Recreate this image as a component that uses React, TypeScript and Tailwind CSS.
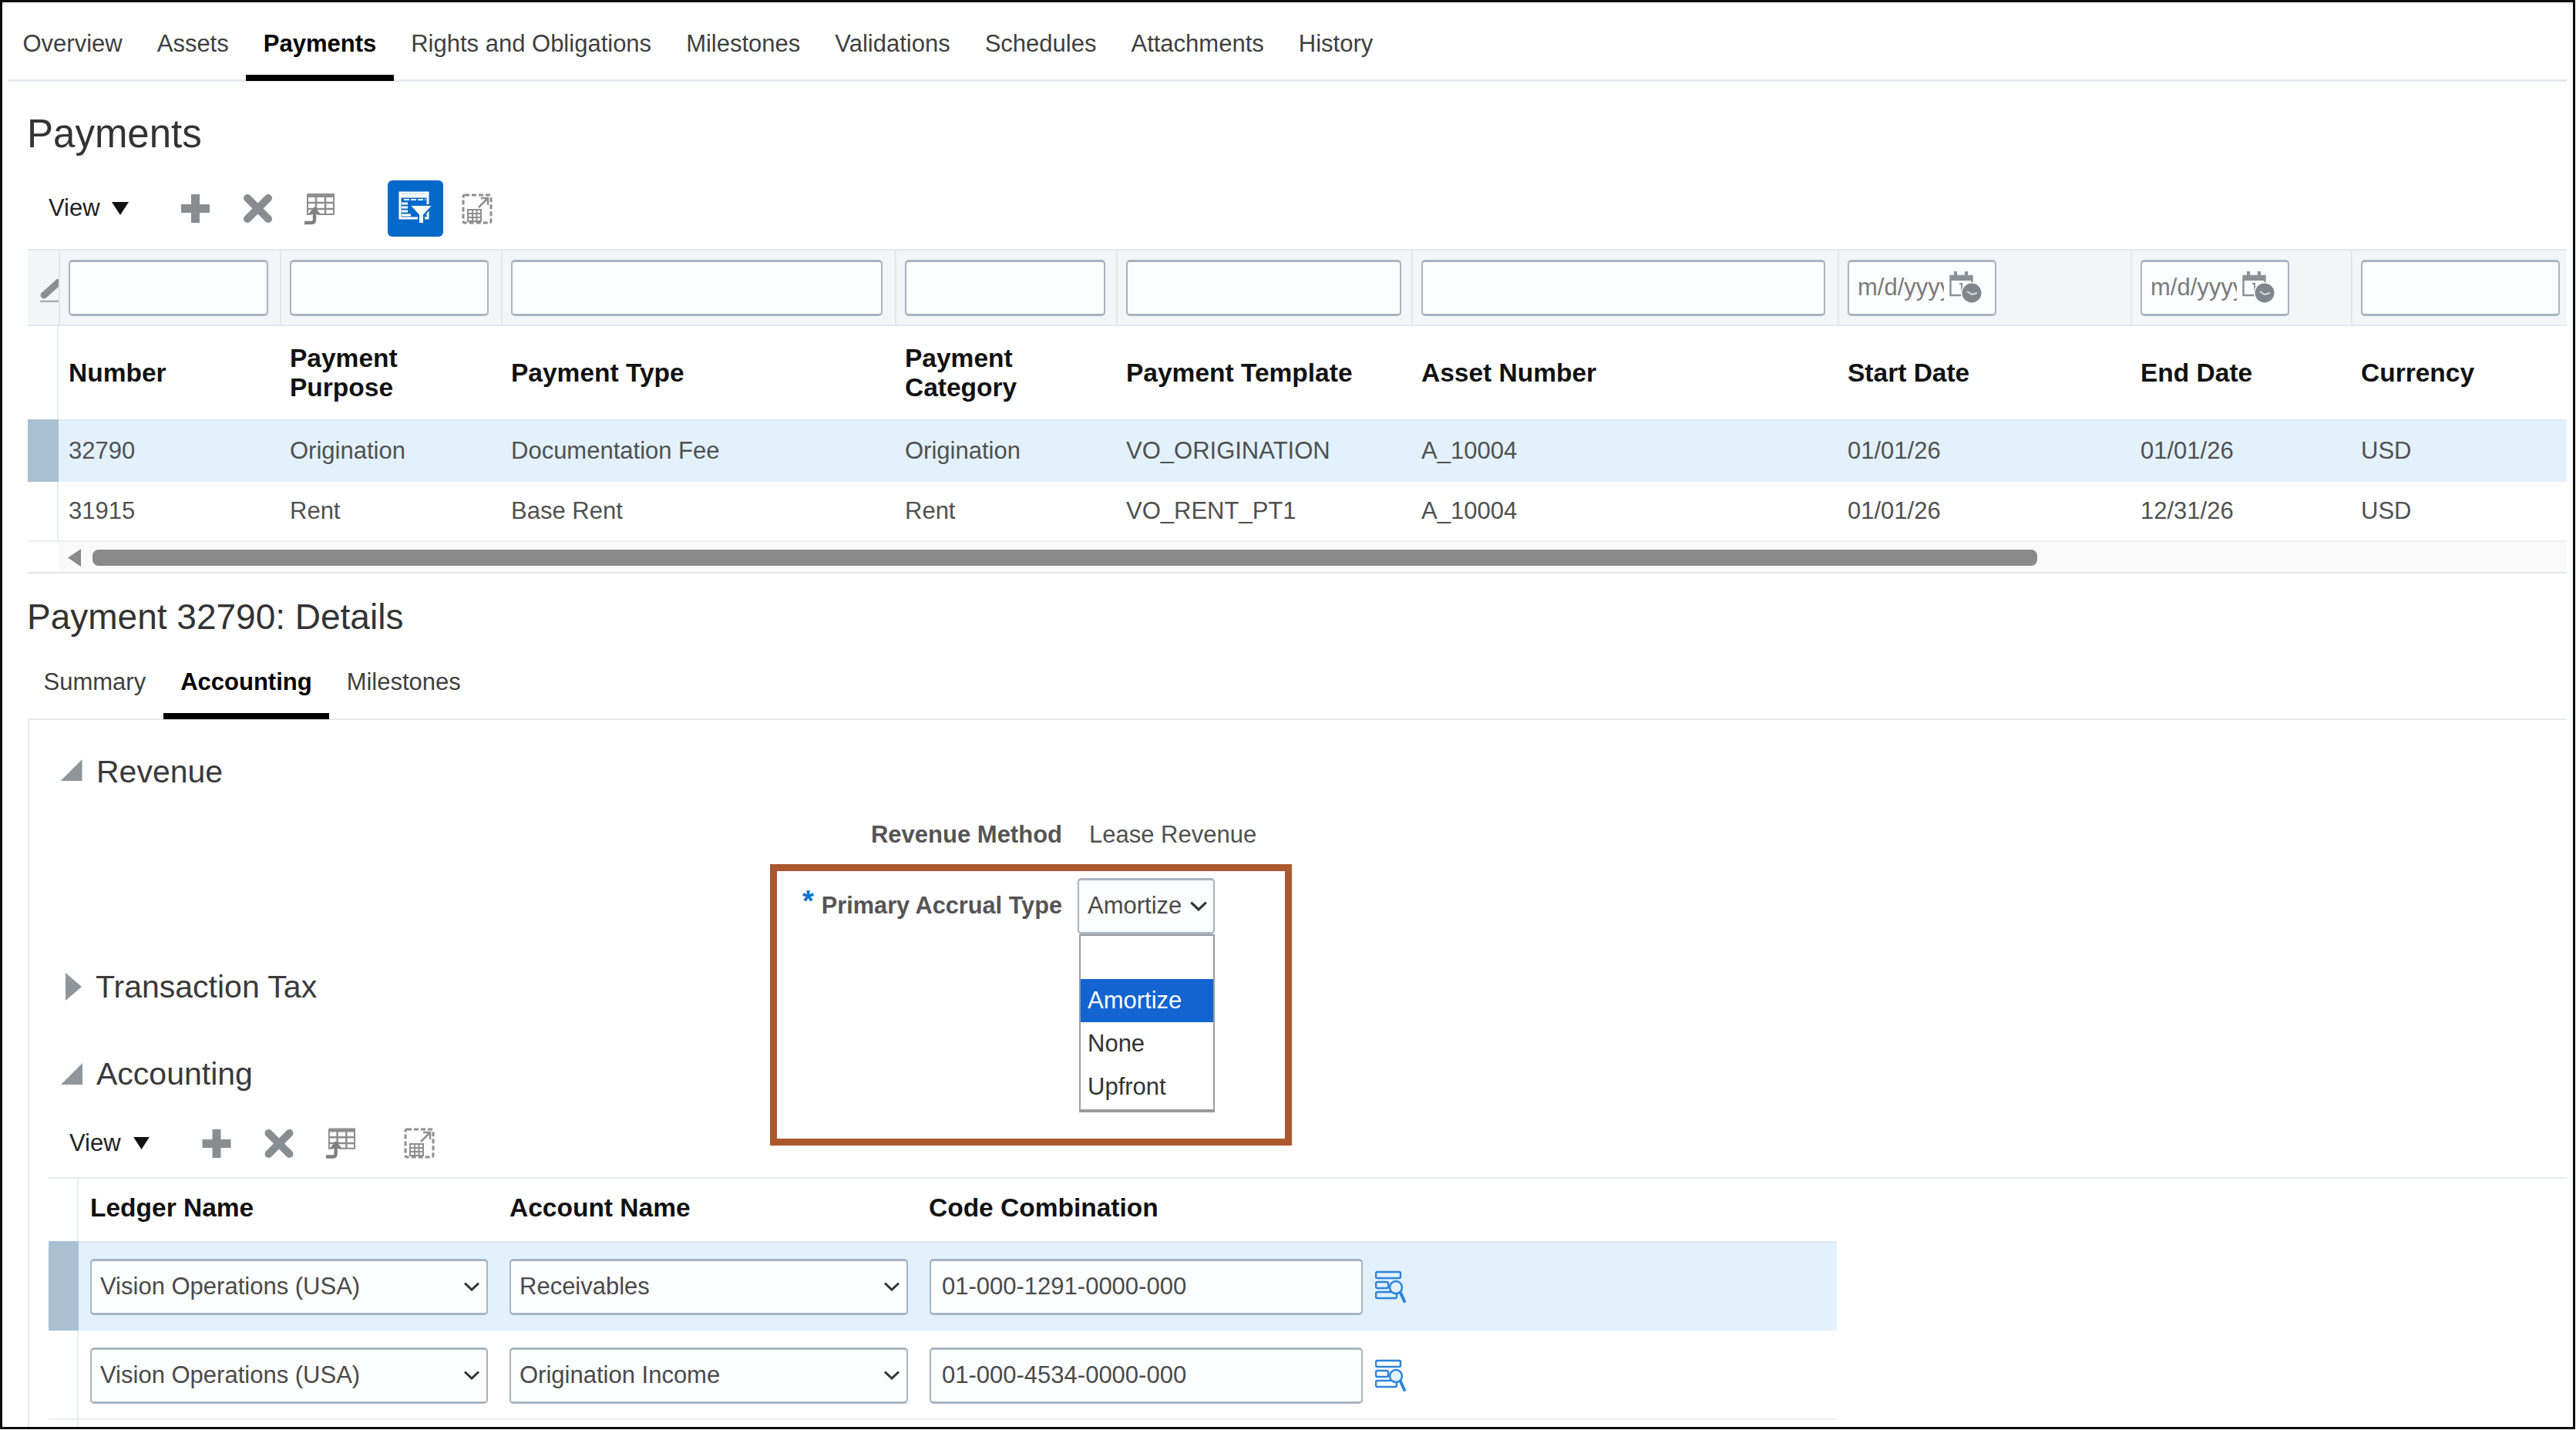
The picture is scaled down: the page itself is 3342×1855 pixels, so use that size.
import { ReactNode } from "react";

const topTabs = ["Overview", "Assets", "Payments", "Rights and Obligations", "Milestones", "Validations", "Schedules", "Attachments", "History"];
const subTabs = ["Summary", "Accounting", "Milestones"];

// column widths are the same for the filter row and the table below it
const paymentCols = "grid grid-cols-[40px_287px_287px_511px_287px_383px_553px_380px_286px_280px]";
const accountCols = "grid grid-cols-[39px_546px_544px_1191px]";

const filterWidths = ["w-[259px]", "w-[258px]", "w-[482px]", "w-[260px]", "w-[357px]", "w-[524px]", "date", "date", "w-[258px]"];
const headers = ["Number", "Payment Purpose", "Payment Type", "Payment Category", "Payment Template", "Asset Number", "Start Date", "End Date", "Currency"];
const headerWidths = ["", "w-[180px]", "", "w-[180px]", "", "", "", "", ""];
const rows = [
    ["32790", "Origination", "Documentation Fee", "Origination", "VO_ORIGINATION", "A_10004", "01/01/26", "01/01/26", "USD"],
    ["31915", "Rent", "Base Rent", "Rent", "VO_RENT_PT1", "A_10004", "01/01/26", "12/31/26", "USD"],
];

const boxBorder = "border-2 border-t-[3px] border-b-[3px] border-[#a7b5c1] rounded-[5px] bg-[#fcfdfe]";

function Caret({ className }: { className: string }) {
    return (
        <svg className={className} viewBox="0 0 22 17">
            <polygon points="0,0 22,0 11,17" fill="#111" />
        </svg>
    );
}

function Chevron({ className }: { className: string }) {
    return (
        <svg className={className} viewBox="0 0 22 12">
            <polyline points="2,1.5 11,10 20,1.5" fill="none" stroke="#333" strokeWidth="3" />
        </svg>
    );
}

function PlusIcon({ className }: { className: string }) {
    return (
        <svg className={className} viewBox="0 0 37 37">
            <path d="M13 0h11v13h13v11H24v13H13V24H0V13h13z" fill="#888d92" />
        </svg>
    );
}

function CrossIcon({ className }: { className: string }) {
    return (
        <svg className={className} viewBox="0 0 37 37">
            <path d="M5 5L32 32M32 5L5 32" stroke="#888d92" strokeWidth="10" strokeLinecap="round" />
        </svg>
    );
}

function ImportIcon({ className }: { className: string }) {
    return (
        <svg className={className} viewBox="0 0 40 42">
            <path d="M5 3h34v25H5z" fill="none" stroke="#8d8d8d" strokeWidth="2" />
            <path d="M5 1h35v5H5z" fill="#8d8d8d" />
            <path d="M16 4v24M28 4v24M5 13h34M5 21h34" stroke="#8d8d8d" strokeWidth="2.5" />
            <path d="M2 39h8q4 0 4-4V26" fill="none" stroke="#ffffff" strokeWidth="8" />
            <path d="M1 39h9q4 0 4-4V26" fill="none" stroke="#7f7f7f" strokeWidth="4.5" />
            <polygon points="6,28 14,18 22,28" fill="#7f7f7f" />
        </svg>
    );
}

function DetachIcon({ className }: { className: string }) {
    return (
        <svg className={className} viewBox="0 0 40 40">
            <rect x="2" y="2" width="36" height="36" rx="2" fill="none" stroke="#8f8f8f" strokeWidth="3" strokeDasharray="6 3" />
            <path d="M8 21h17v15H8zM14 21v15M19.5 21v15M8 26h17M8 31h17" fill="none" stroke="#8f8f8f" strokeWidth="2" />
            <path d="M22 18L33 7M25 6h9v9" fill="none" stroke="#8f8f8f" strokeWidth="2.5" />
        </svg>
    );
}

function FilterIcon({ className }: { className: string }) {
    return (
        <svg className={className} viewBox="0 0 72 73">
            <rect x="16" y="16" width="36" height="33" fill="none" stroke="#ffffff" strokeWidth="3" />
            <path d="M16 20h37" stroke="#ffffff" strokeWidth="5" />
            <path d="M21 25h28" stroke="#ffffff" strokeWidth="2" strokeDasharray="7 2" />
            <path d="M18 30h8M18 35h8M18 40h8M18 45h12" stroke="#ffffff" strokeWidth="3" />
            <polygon points="28,32 59,32 47,45 47,56 40,56 40,45" fill="#ffffff" stroke="#0469c8" strokeWidth="2" />
        </svg>
    );
}

function DateIcon() {
    return (
        <svg className="w-[44px] h-[42px] ml-[7px] shrink-0" viewBox="0 0 44 42">
            <rect x="1.5" y="6" width="28" height="25" fill="none" stroke="#8b9196" strokeWidth="2.5" />
            <path d="M1 6h29v6H1z" fill="#8b9196" />
            <path d="M8 0v7M22 0v7" stroke="#8b9196" strokeWidth="4" />
            <path d="M13 16h3v10" fill="none" stroke="#8b9196" strokeWidth="2" />
            <circle cx="29" cy="28" r="14" fill="#fcfdfe" />
            <circle cx="29" cy="28" r="12.5" fill="#7f868c" />
            <path d="M23 26l6 4 7-2" fill="none" stroke="#dfe2e5" strokeWidth="2" />
        </svg>
    );
}

function EraserIcon() {
    return (
        <svg className="w-[24px] h-[30px] mt-[8px]" viewBox="0 0 24 30">
            <path d="M5 21L24 4" stroke="#8b8f93" strokeWidth="9" strokeLinecap="round" />
            <path d="M0 29h24" stroke="#a5a8ab" strokeWidth="2.5" />
        </svg>
    );
}

function SearchIcon() {
    return (
        <svg className="w-[40px] h-[43px] ml-[16px]" viewBox="0 0 40 43">
            <g fill="none" stroke="#2c85dc" strokeWidth="2.5">
                <rect x="1" y="2" width="32" height="8" rx="2" />
                <rect x="1" y="15" width="16" height="8" rx="2" />
                <rect x="1" y="28" width="27" height="8" rx="2" />
                <circle cx="27" cy="22" r="8" fill="#e3f1fd" />
                <path d="M33 29L38 40" strokeWidth="4" strokeLinecap="round" />
            </g>
        </svg>
    );
}

function Triangle({ className }: { className: string }) {
    return (
        <svg className={className} viewBox="0 0 28 28">
            <polygon points="28,0 28,28 0,28" fill="#8e969c" />
        </svg>
    );
}

function SectionTitle({ icon, className, children }: { icon: ReactNode; className: string; children: ReactNode }) {
    return (
        <div className={`flex items-center h-[48px] text-[41px] leading-[48px] text-[#3a3a3a] ${className}`}>
            {icon}
            {children}
        </div>
    );
}

function Select({ text, className }: { text: string; className: string }) {
    return (
        <div className={`flex items-center justify-between h-[73px] pl-[11px] pr-[8px] text-[31px] text-[#4a4a4a] ${boxBorder} ${className}`}>
            {text}
            <Chevron className="w-[22px] h-[12px]" />
        </div>
    );
}

function Tabs({ items, active, className }: { items: string[]; active: string; className: string }) {
    return (
        <div className="flex -ml-[3px]">
            {items.map(t => (
                <div key={t} className={`flex items-center px-[22.5px] text-[31px] border-b-[8px] ${className} ${t === active ? "font-bold text-black border-black" : "text-[#3f3f3f] border-transparent"}`}>
                    {t}
                </div>
            ))}
        </div>
    );
}

export default function App() {
    return (
        <div className="relative w-[3342px] h-[1855px] bg-white overflow-hidden font-['Liberation_Sans',Arial,sans-serif]">
            <div className="flex flex-col w-[3341px] h-[1854px] border-[3px] border-[#0c0c0c] overflow-hidden">
                {/* main tabs */}
                <div className="ml-[7px] mr-[8px] h-[103px] shrink-0 border-b-[3px] border-[#e5ebf0]">
                    <Tabs items={topTabs} active="Payments" className="h-[102px] pt-[14px]" />
                </div>

                <h1 className="ml-[32px] mt-[38px] text-[51px] leading-[60px] text-[#333]">Payments</h1>

                {/* payments toolbar */}
                <div className="flex items-center h-[73px] mt-[30px] ml-[60px] shrink-0">
                    <span className="text-[31px] text-[#222]">View</span>
                    <Caret className="w-[22px] h-[17px] ml-[15px]" />
                    <PlusIcon className="w-[37px] h-[37px] ml-[68px]" />
                    <CrossIcon className="w-[37px] h-[37px] ml-[44px]" />
                    <ImportIcon className="w-[40px] h-[42px] ml-[41px]" />
                    <div className="w-[72px] h-[73px] ml-[69px] rounded-[6px] bg-[#0469c8]">
                        <FilterIcon className="w-[72px] h-[73px]" />
                    </div>
                    <DetachIcon className="w-[40px] h-[40px] ml-[24px]" />
                </div>

                {/* payments table */}
                <div className="ml-[33px] w-[3294px] mt-[16px] shrink-0">
                    <div className={`${paymentCols} h-[100px] bg-[#f3f5f8] border-y-2 border-[#e3e8ed]`}>
                        <div className="flex items-center justify-end overflow-hidden"><EraserIcon /></div>
                        {filterWidths.map((w, i) => (
                            <div key={i} className="flex items-center pl-[11px] border-l-2 border-[#e3e8ed]">
                                {w === "date" ? (
                                    <div className={`flex items-center w-[193px] h-[73px] pl-[11px] ${boxBorder}`}>
                                        <input readOnly placeholder="m/d/yyyy" className="w-[112px] shrink-0 bg-transparent outline-none text-[31px] placeholder:text-[#7b7b7b]" />
                                        <DateIcon />
                                    </div>
                                ) : (
                                    <div className={`h-[73px] ${w} ${boxBorder}`}></div>
                                )}
                            </div>
                        ))}
                    </div>

                    <div className={`${paymentCols} h-[121px]`}>
                        <div className="border-r-2 border-[#e8edf1]"></div>
                        {headers.map((h, i) => (
                            <div key={h} className="flex items-center pl-[13px] text-[33.5px] leading-[38px] font-bold text-[#111]">
                                <span className={headerWidths[i]}>{h}</span>
                            </div>
                        ))}
                    </div>

                    {rows.map((row, r) => (
                        <div key={row[0]} className={`${paymentCols} ${r === 0 ? "h-[81px] bg-[#e3f1fd] border-t-2 border-[#dfe8ef]" : "h-[78px] border-b-2 border-[#eef0f2]"}`}>
                            <div className={r === 0 ? "bg-[#a9c0d3] -mt-[2px]" : "border-r-2 border-[#e8edf1]"}></div>
                            {row.map((c, i) => (
                                <div key={i} className="flex items-center pl-[13px] text-[31px] text-[#505050]">{c}</div>
                            ))}
                        </div>
                    ))}

                    <div className="flex h-[41px] border-b-2 border-[#e3e8ed]">
                        <div className="w-[40px]"></div>
                        <div className="flex items-center flex-1 bg-[#fafafa] pl-[12px] pt-[2px]">
                            <svg className="w-[17px] h-[23px]" viewBox="0 0 17 23">
                                <polygon points="17,0 17,23 0,11.5" fill="#8a8a8a" />
                            </svg>
                            <div className="w-[2523px] h-[21px] ml-[15px] rounded-[8px] bg-[#8a8a8a]"></div>
                        </div>
                    </div>
                </div>

                <h2 className="ml-[32px] mt-[28px] text-[46px] leading-[56px] text-[#333]">Payment 32790: Details</h2>

                {/* detail tabs */}
                <div className="ml-[33px] mr-[8px] mt-[12px] h-[94px] shrink-0 border-b-2 border-[#e5ebf0]">
                    <div className="ml-[1px]">
                        <Tabs items={subTabs} active="Accounting" className="h-[93px] pt-[5px]" />
                    </div>
                </div>

                {/* accounting panel */}
                <div className="ml-[33px] mr-[8px] flex-1 min-h-0 border-l-2 border-[#e5ebf0] flex flex-col">
                    <SectionTitle className="mt-[43px] shrink-0" icon={<Triangle className="w-[29px] h-[28px] ml-[40px] mr-[18px] -mt-[4px]" />}>
                        Revenue
                    </SectionTitle>

                    <div className="flex items-center h-[40px] mt-[38px] shrink-0 text-[31px]">
                        <div className="w-[1340px] text-right font-bold text-[#555]">Revenue Method</div>
                        <div className="ml-[35px] text-[#505050]">Lease Revenue</div>
                    </div>

                    <div className="flex items-center h-[73px] mt-[36px] shrink-0 text-[31px]">
                        <div className="w-[1340px] flex justify-end font-bold text-[#555] text-[30.7px]">
                            <span className="text-[#0572ce] text-[38px] leading-[30px] font-bold mr-[10px] mt-[2px]">*</span>
                            Primary Accrual Type
                        </div>
                        <div className={`relative flex items-center justify-between ml-[20px] w-[178px] h-[73px] pl-[11px] pr-[7px] text-[#4a4a4a] ${boxBorder}`}>
                            Amortize
                            <Chevron className="w-[24px] h-[13px]" />
                            <div className="absolute top-full left-0 w-[176px] h-[231px] mt-[3px] border-2 border-b-[4px] border-[#9b9b9b] bg-white text-[31px] text-[#333]">
                                <div className="h-[56px]"></div>
                                <div className="flex items-center h-[56px] pl-[9px] bg-[#1363d1] text-white">Amortize</div>
                                <div className="flex items-center h-[56px] pl-[9px]">None</div>
                                <div className="flex items-center h-[57px] pl-[9px]">Upfront</div>
                            </div>
                        </div>
                    </div>

                    <SectionTitle className="mt-[44px] shrink-0" icon={
                        <svg className="w-[21px] h-[36px] ml-[47px] mr-[18px]" viewBox="0 0 21 36">
                            <polygon points="0,0 21,18 0,36" fill="#8e969c" />
                        </svg>
                    }>
                        Transaction Tax
                    </SectionTitle>

                    <SectionTitle className="mt-[65px] shrink-0" icon={<Triangle className="w-[28px] h-[28px] ml-[41px] mr-[18px]" />}>
                        Accounting
                    </SectionTitle>

                    <div className="flex items-center h-[42px] mt-[45px] ml-[52px] shrink-0">
                        <span className="text-[31px] text-[#222]">View</span>
                        <Caret className="w-[21px] h-[16px] ml-[16px]" />
                        <PlusIcon className="w-[38px] h-[37px] ml-[68px]" />
                        <CrossIcon className="w-[38px] h-[37px] ml-[43px]" />
                        <ImportIcon className="w-[39px] h-[42px] ml-[41px]" />
                        <DetachIcon className="w-[40px] h-[40px] ml-[63px]" />
                    </div>

                    {/* accounting table */}
                    <div className="ml-[25px] mt-[23px] border-t-2 border-[#e5ebf0]">
                        <div className={`${accountCols} h-[81px] w-[2320px]`}>
                            <div className="border-r-2 border-[#e8edf1]"></div>
                            {["Ledger Name", "Account Name", "Code Combination"].map((h, i) => (
                                <div key={h} className={`flex items-center pb-[5px] text-[33.5px] font-bold text-[#111] ${i === 0 ? "pl-[15px]" : "pl-[13px]"}`}>{h}</div>
                            ))}
                        </div>
                        {[
                            { account: "Receivables", code: "01-000-1291-0000-000" },
                            { account: "Origination Income", code: "01-000-4534-0000-000" },
                        ].map((r, i) => (
                            <div key={r.code} className={`${accountCols} w-[2320px] ${i === 0 ? "h-[116px] bg-[#e3f1fd] border-t-2 border-[#dfe8ef]" : "h-[116px] pt-[2px] border-b-2 border-[#eef0f2]"}`}>
                                <div className={i === 0 ? "bg-[#a9c0d3] -mt-[2px]" : "border-r-2 border-[#e8edf1] -mt-[2px]"}></div>
                                <div className="flex items-center pl-[15px]"><Select text="Vision Operations (USA)" className="w-[516px]" /></div>
                                <div className="flex items-center pl-[13px]"><Select text={r.account} className="w-[517px]" /></div>
                                <div className="flex items-center pl-[14px]">
                                    <div className={`flex items-center w-[562px] h-[73px] pl-[14px] text-[31px] text-[#4a4a4a] ${boxBorder}`}>{r.code}</div>
                                    <SearchIcon />
                                </div>
                            </div>
                        ))}
                        <div className="w-[39px] h-[20px] border-r-2 border-[#e8edf1]"></div>
                    </div>
                </div>
            </div>

            {/* highlight box drawn on top of the page */}
            <div className="absolute left-[999px] top-[1121px] w-[677px] h-[365px] border-[9px] border-[#ad572d]"></div>
        </div>
    );
}
